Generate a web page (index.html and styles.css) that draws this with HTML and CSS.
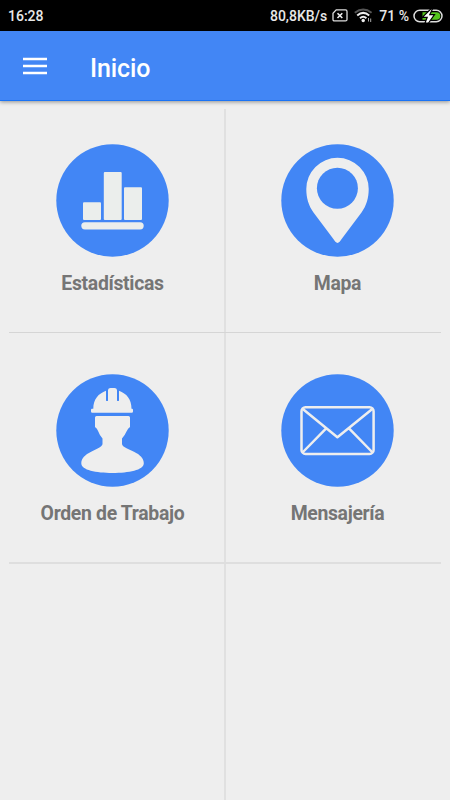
FILE: index.html
```html
<!DOCTYPE html>
<html lang="es">
<head>
<meta charset="utf-8">
<title>Inicio</title>
<link rel="stylesheet" href="styles.css">
</head>
<body>
<div class="status">
  <span class="time">16:28</span>
  <span class="speed">80,8KB/s</span>
  <svg class="sim" width="16" height="13" viewBox="0 0 16 13"><path d="M4.200.900h9.300q1.500 0 1.500 1.500v8q0 1.500-1.500 1.500h-11q-1.500 0-1.500-1.500V4.200z" fill="none" stroke="#ddd" stroke-width="1.300"/><path d="M5.500 4.200l4.800 4.800m0-4.800L5.500 9" stroke="#eee" stroke-width="1.600"/></svg>
  <svg class="wifi" width="19" height="15" viewBox="0 0 19 15"><g fill="none" stroke-width="2"><path d="M.8 4.700Q9.200 -1.700 17.600 4.700" stroke="#555"/><path d="M3.200 7.400Q9.200 2.400 15.200 7.400M6 10.300Q9.200 7.300 12.400 10.300" stroke="#eee"/></g><circle cx="9.200" cy="12.500" r="1.700" fill="#eee"/><path d="M14.500 10v3.500M16.700 10.500v3.500" stroke="#aaa"/></svg>
  <span class="percent">71 %</span>
  <svg class="battery" width="30" height="14" viewBox="0 0 30 14"><rect x="1" y="1.300" width="28" height="11.400" rx="5.700" fill="none" stroke="#ddd" stroke-width="1.500"/><path d="M9.500 3.200h14a3.800 3.800 0 0 1 0 7.600h-14z" fill="#55c51d"/><path d="M17.800 0L9.300 8.300h4.900L12 14h3.500l6-8.400h-4.700L19.500 0z" fill="#fff" stroke="#000" stroke-width="1.200"/></svg>
</div>
<header class="bar">
  <svg class="menu" width="24" height="18" viewBox="0 0 24 18"><path d="M0 2h24M0 9h24M0 16h24" stroke="#fff" stroke-width="2.500"/></svg>
  <h1>Inicio</h1>
</header>
<main class="grid">
  <section class="tile">
    <svg class="icon" viewBox="0 0 113 113"><circle class="disc" cx="56.500" cy="56.500" r="56.200"/><g fill="#ebeeec"><rect x="27" y="58.300" width="18" height="17.700" rx="1"/><rect x="47.800" y="27.900" width="17.900" height="48.100" rx="1"/><rect x="68" y="43.300" width="18" height="32.700" rx="1"/><rect x="25.300" y="78.200" width="62.400" height="7.200" rx="3.600"/></g></svg>
    <span class="label">Estadísticas</span>
  </section>
  <section class="tile">
    <svg class="icon" viewBox="0 0 113 113"><circle class="disc" cx="56.500" cy="56.500" r="56.200"/><path class="shape" d="M56.500 99Q54.500 98.500 52 94.500L32.500 68.500C27.500 61.500 25.300 54 25.300 45a31.200 31.200 0 0 1 62.400 0c0 9-2.200 16.500-7.200 23.500L61 94.500Q58.500 98.500 56.500 99z"/><circle class="disc" cx="56.400" cy="44.200" r="20.500"/></svg>
    <span class="label">Mapa</span>
  </section>
  <hr class="rule">
  <section class="tile">
    <svg class="icon" viewBox="0 0 113 113"><circle class="disc" cx="56.500" cy="56.500" r="56.200"/><g class="shape"><path d="M37.300 34.700C37.300 25 42.500 19.500 50 16.700V26.700H52V16Q52.300 14 54.500 14h4q2.200 0 2.500 2V26.700H63V16.700C70.500 19.500 75.500 25 75.500 34.700h.5q1 0 1 1.200v1.600q0 1.300-1.300 1.300H36.300Q35 38.800 35 37.500v-1.600q0-1.200 1-1.200z"/><path d="M40.500 41.900h32q1.500 0 1.500 1.500V53q-2 1-3.500 4.500T66 64.500V70q0 2 5 4.500l7 3.300c6 3 9.800 6.500 9.800 11.500 0 7-15 9.700-31.300 9.700s-31.200-2.700-31.200-9.700c0-5 3.800-8.500 9.800-11.500l6-3q5.400-2.700 5.400-4.800v-5.500Q43.500 61 42.300 57.500T39 53v-9.600q0-1.500 1.500-1.500z"/></g><path d="M51.100 16v10.700M62 16v10.700" stroke="#4286f5" stroke-width="1.700"/></svg>
    <span class="label">Orden de Trabajo</span>
  </section>
  <section class="tile">
    <svg class="icon" viewBox="0 0 113 113"><circle class="disc" cx="56.500" cy="56.500" r="56.200"/><g fill="none" stroke="#eee" stroke-width="2.500" stroke-linejoin="round"><rect x="20.500" y="33.200" width="72.100" height="46.700" rx="4"/><path d="M21.500 34.700L56.400 63.200 91.600 34.700M45.200 54.300L21.500 78.500M68 54.300L91.600 78.500"/></g></svg>
    <span class="label">Mensajería</span>
  </section>
  <hr class="rule soft">
</main>
</body>
</html>
```

FILE: styles.css
```css
* { box-sizing: border-box; }
body {
  margin: 0;
  height: 800px;
  display: flex;
  flex-direction: column;
  overflow: hidden;
  background: #eee;
  font-family: Roboto, "Liberation Sans", sans-serif;
}
svg { display: block; flex: none; }
.status {
  height: 31px;
  flex: none;
  display: flex;
  align-items: center;
  padding: 0 7px 0 8px;
  background: #000;
  color: #e8e8e8;
  font-size: 14px;
  font-weight: 500;
  white-space: nowrap;
}
.time { margin-right: auto; }
.sim { margin-left: 5px; }
.wifi { margin-left: 6px; }
.percent { margin: 0 4px 0 6px; }
.bar {
  height: 70px;
  flex: none;
  display: flex;
  align-items: center;
  padding-left: 23px;
  background: #4286f5;
  border-bottom: 1px solid #1a73f5;
  box-shadow: 0 1px 4px rgba(0, 0, 0, .4);
  color: #fff;
}
.bar h1 {
  margin: 6px 0 0 43px;
  font-size: 25px;
  line-height: 30px;
  font-weight: 500;
  letter-spacing: -.1px;
}
.grid {
  flex: 1;
  margin-top: 8px;
  display: grid;
  grid-template-columns: 1fr 1fr;
  grid-template-rows: 223px 1px 229px 2px;
  background: linear-gradient(#e0e0e0, #e0e0e0) center top / 2px 100% no-repeat;
}
.tile {
  display: flex;
  flex-direction: column;
  align-items: center;
  padding-top: 35px;
}
.rule ~ .tile { padding-top: 41px; }
.icon { width: 113px; height: 113px; }
.disc { fill: #4286f5; }
.shape { fill: #eee; }
.label {
  margin-top: 16px;
  font-size: 19.4px;
  line-height: 22px;
  font-weight: 700;
  letter-spacing: -.32px;
  color: #757575;
}
.rule {
  grid-column: 1 / -1;
  margin: 0 9px;
  border: 0;
  background: #d5d5d5;
}
.soft { background: #dedede; }
```
